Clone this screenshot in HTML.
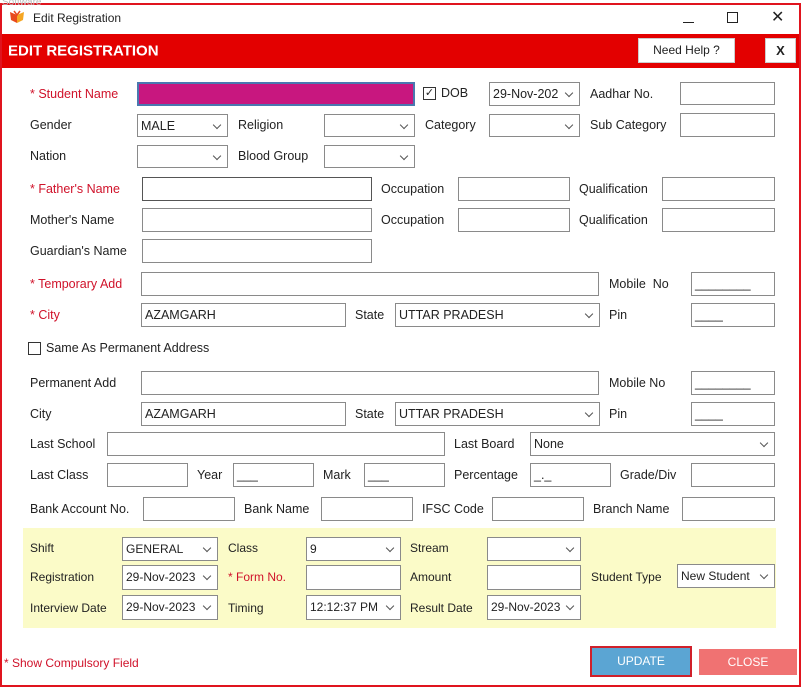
<!DOCTYPE html>
<html><head><meta charset="utf-8"><style>
*{box-sizing:border-box;margin:0;padding:0}
body{width:801px;height:687px;background:#fff;position:relative;overflow:hidden;font-family:"Liberation Sans",sans-serif;font-size:12.5px;color:#222}
.a{position:absolute}
.l{position:absolute;transform:translateY(-50%);white-space:nowrap;font-size:12.5px}
.r{color:#d0122a}
.b{position:absolute;border:1px solid #8a8a8a;background:#fff;font-size:12.5px;padding-left:3px;line-height:22px;white-space:nowrap;overflow:hidden}
.c:after{content:"";position:absolute;right:7px;top:7px;width:5px;height:5px;border-right:1px solid #555;border-bottom:1px solid #555;transform:rotate(45deg)}
.y .l,.y .b{font-size:12px}
</style></head><body>
<div class="a" style="left:0;top:3px;width:801px;height:684px;border:2px solid #e0141e"></div>
<div class="a" style="left:2px;top:0;font-size:10px;color:#bbb;line-height:5px">Software</div>
<!-- title bar -->
<svg class="a" style="left:9px;top:10px" width="16" height="14" viewBox="0 0 16 14"><path d="M1 2 L8 5 L8 13 L2 10Z" fill="#e84a1c"/><path d="M15 2 L8 5 L8 13 L14 10Z" fill="#f5a623"/><path d="M5 1 L8 5 L11 1" fill="none" stroke="#e84a1c" stroke-width="1.5"/></svg>
<div class="l" style="left:33px;top:18px;font-size:12px">Edit Registration</div>
<div class="a" style="left:683px;top:22px;width:11px;height:1px;background:#222"></div>
<div class="a" style="left:727px;top:12px;width:11px;height:11px;border:1px solid #222"></div>
<div class="l" style="left:771px;top:17px;font-size:16px">✕</div>
<!-- header -->
<div class="a" style="left:2px;top:34px;width:797px;height:34px;background:#e30000"></div>
<div class="l" style="left:8px;top:51px;color:#fff;font-weight:bold;font-size:15px">EDIT REGISTRATION</div>
<div class="a" style="left:638px;top:38px;width:97px;height:25px;background:#fff;border:1px solid #ccc;text-align:center;line-height:23px;font-size:12px">Need Help ?</div>
<div class="a" style="left:765px;top:38px;width:31px;height:25px;background:#fff;border:1px solid #ccc;text-align:center;line-height:23px;font-size:13px;font-weight:bold">X</div>

<!-- row1 -->
<div class="l r" style="left:30px;top:94px">* Student Name</div>
<div class="b" style="left:137px;top:82px;width:278px;height:24px;background:#c8177f;border:2px solid #4a78b0"></div>
<div class="a" style="left:423px;top:87px;width:13px;height:13px;border:1px solid #333;font-size:11px;line-height:11px;text-align:center">✓</div>
<div class="l" style="left:441px;top:93px">DOB</div>
<div class="b c" style="left:489px;top:82px;width:91px;height:24px">29-Nov-202</div>
<div class="l" style="left:590px;top:94px">Aadhar No.</div>
<div class="b" style="left:680px;top:82px;width:95px;height:23px"></div>
<!-- row2 -->
<div class="l" style="left:30px;top:125px">Gender</div>
<div class="b c" style="left:137px;top:114px;width:91px;height:23px">MALE</div>
<div class="l" style="left:238px;top:125px">Religion</div>
<div class="b c" style="left:324px;top:114px;width:91px;height:23px"></div>
<div class="l" style="left:425px;top:125px">Category</div>
<div class="b c" style="left:489px;top:114px;width:91px;height:23px"></div>
<div class="l" style="left:590px;top:125px">Sub Category</div>
<div class="b" style="left:680px;top:113px;width:95px;height:24px"></div>
<!-- row3 -->
<div class="l" style="left:30px;top:156px">Nation</div>
<div class="b c" style="left:137px;top:145px;width:91px;height:23px"></div>
<div class="l" style="left:238px;top:156px">Blood Group</div>
<div class="b c" style="left:324px;top:145px;width:91px;height:23px"></div>
<!-- row4 -->
<div class="l r" style="left:30px;top:189px">* Father's Name</div>
<div class="b" style="left:142px;top:177px;width:230px;height:24px;border-color:#555"></div>
<div class="l" style="left:381px;top:189px">Occupation</div>
<div class="b" style="left:458px;top:177px;width:112px;height:24px"></div>
<div class="l" style="left:579px;top:189px">Qualification</div>
<div class="b" style="left:662px;top:177px;width:113px;height:24px"></div>
<!-- row5 -->
<div class="l" style="left:30px;top:220px">Mother's Name</div>
<div class="b" style="left:142px;top:208px;width:230px;height:24px"></div>
<div class="l" style="left:381px;top:220px">Occupation</div>
<div class="b" style="left:458px;top:208px;width:112px;height:24px"></div>
<div class="l" style="left:579px;top:220px">Qualification</div>
<div class="b" style="left:662px;top:208px;width:113px;height:24px"></div>
<!-- row6 -->
<div class="l" style="left:30px;top:251px">Guardian's Name</div>
<div class="b" style="left:142px;top:239px;width:230px;height:24px"></div>
<!-- row7 -->
<div class="l r" style="left:30px;top:284px">* Temporary Add</div>
<div class="b" style="left:141px;top:272px;width:458px;height:24px"></div>
<div class="l" style="left:609px;top:284px">Mobile&nbsp; No</div>
<div class="b" style="left:691px;top:272px;width:84px;height:24px">________</div>
<!-- row8 -->
<div class="l r" style="left:30px;top:315px">* City</div>
<div class="b" style="left:141px;top:303px;width:205px;height:24px">AZAMGARH</div>
<div class="l" style="left:355px;top:315px">State</div>
<div class="b c" style="left:395px;top:303px;width:205px;height:24px">UTTAR PRADESH</div>
<div class="l" style="left:609px;top:315px">Pin</div>
<div class="b" style="left:691px;top:303px;width:84px;height:24px">____</div>
<!-- row9 -->
<div class="a" style="left:28px;top:342px;width:13px;height:13px;border:1px solid #333"></div>
<div class="l" style="left:46px;top:348px">Same As Permanent Address</div>
<!-- row10 -->
<div class="l" style="left:30px;top:383px">Permanent Add</div>
<div class="b" style="left:141px;top:371px;width:458px;height:24px"></div>
<div class="l" style="left:609px;top:383px">Mobile No</div>
<div class="b" style="left:691px;top:371px;width:84px;height:24px">________</div>
<!-- row11 -->
<div class="l" style="left:30px;top:414px">City</div>
<div class="b" style="left:141px;top:402px;width:205px;height:24px">AZAMGARH</div>
<div class="l" style="left:355px;top:414px">State</div>
<div class="b c" style="left:395px;top:402px;width:205px;height:24px">UTTAR PRADESH</div>
<div class="l" style="left:609px;top:414px">Pin</div>
<div class="b" style="left:691px;top:402px;width:84px;height:24px">____</div>
<!-- row12 -->
<div class="l" style="left:30px;top:444px">Last School</div>
<div class="b" style="left:107px;top:432px;width:338px;height:24px"></div>
<div class="l" style="left:454px;top:444px">Last Board</div>
<div class="b c" style="left:530px;top:432px;width:245px;height:24px">None</div>
<!-- row13 -->
<div class="l" style="left:30px;top:475px">Last Class</div>
<div class="b" style="left:107px;top:463px;width:81px;height:24px"></div>
<div class="l" style="left:197px;top:475px">Year</div>
<div class="b" style="left:233px;top:463px;width:81px;height:24px">___</div>
<div class="l" style="left:323px;top:475px">Mark</div>
<div class="b" style="left:364px;top:463px;width:81px;height:24px">___</div>
<div class="l" style="left:454px;top:475px">Percentage</div>
<div class="b" style="left:530px;top:463px;width:81px;height:24px">_._</div>
<div class="l" style="left:620px;top:475px">Grade/Div</div>
<div class="b" style="left:691px;top:463px;width:84px;height:24px"></div>
<!-- row14 -->
<div class="l" style="left:30px;top:509px">Bank Account No.</div>
<div class="b" style="left:143px;top:497px;width:92px;height:24px"></div>
<div class="l" style="left:244px;top:509px">Bank Name</div>
<div class="b" style="left:321px;top:497px;width:92px;height:24px"></div>
<div class="l" style="left:422px;top:509px">IFSC Code</div>
<div class="b" style="left:492px;top:497px;width:92px;height:24px"></div>
<div class="l" style="left:593px;top:509px">Branch Name</div>
<div class="b" style="left:682px;top:497px;width:93px;height:24px"></div>
<!-- yellow -->
<div class="y">
<div class="a" style="left:23px;top:528px;width:753px;height:100px;background:#fbfbc8"></div>
<div class="l" style="left:30px;top:548px">Shift</div>
<div class="b c" style="left:122px;top:537px;width:96px;height:24px">GENERAL</div>
<div class="l" style="left:228px;top:548px">Class</div>
<div class="b c" style="left:306px;top:537px;width:95px;height:24px">9</div>
<div class="l" style="left:410px;top:548px">Stream</div>
<div class="b c" style="left:487px;top:537px;width:94px;height:24px"></div>
<div class="l" style="left:30px;top:577px">Registration</div>
<div class="b c" style="left:122px;top:565px;width:96px;height:25px">29-Nov-2023</div>
<div class="l r" style="left:228px;top:577px">* Form No.</div>
<div class="b" style="left:306px;top:565px;width:95px;height:25px"></div>
<div class="l" style="left:410px;top:577px">Amount</div>
<div class="b" style="left:487px;top:565px;width:94px;height:25px"></div>
<div class="l" style="left:591px;top:577px">Student Type</div>
<div class="b c" style="left:677px;top:564px;width:98px;height:24px">New Student</div>
<div class="l" style="left:30px;top:608px">Interview Date</div>
<div class="b c" style="left:122px;top:595px;width:96px;height:25px">29-Nov-2023</div>
<div class="l" style="left:228px;top:608px">Timing</div>
<div class="b c" style="left:306px;top:595px;width:95px;height:25px">12:12:37 PM</div>
<div class="l" style="left:410px;top:608px">Result Date</div>
<div class="b c" style="left:487px;top:595px;width:94px;height:25px">29-Nov-2023</div>
</div>
<!-- bottom -->
<div class="l r" style="left:4px;top:663px;font-size:12px">* Show Compulsory Field</div>
<div class="a" style="left:590px;top:646px;width:102px;height:31px;border:2px solid #d0202a;background:#5ba5d3;color:#fff;text-align:center;line-height:27px;font-size:12px">UPDATE</div>
<div class="a" style="left:699px;top:649px;width:98px;height:26px;background:#f07272;color:#fff;text-align:center;line-height:26px;font-size:12px">CLOSE</div>
</body></html>
